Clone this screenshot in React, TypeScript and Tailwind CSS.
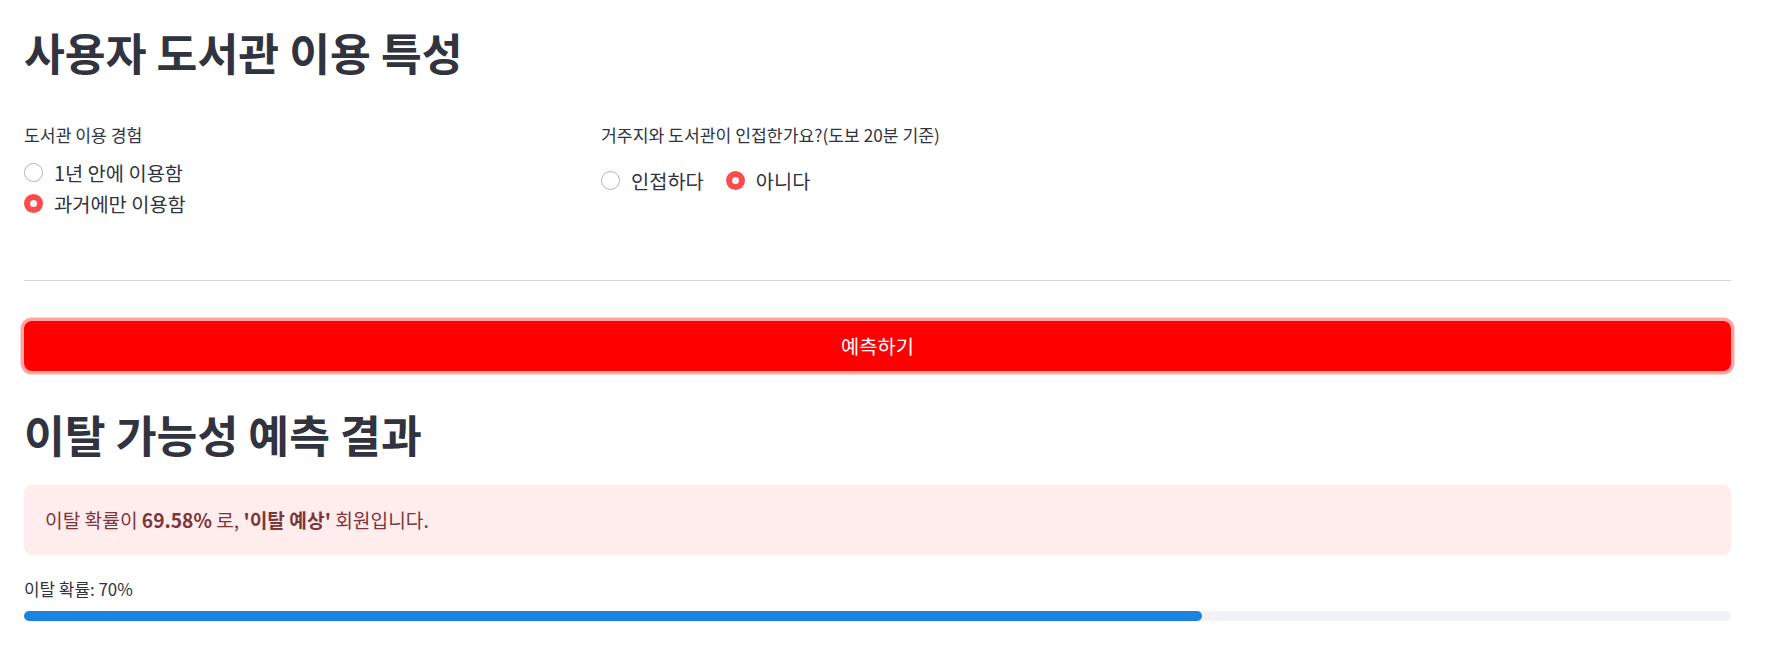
import React, { useState } from 'react';

const font = { fontFamily: '"Noto Sans CJK KR", "Noto Sans", sans-serif' };

type RadioProps = { label: string; checked: boolean; onSelect: () => void };

const Radio: React.FC<RadioProps> = ({ label, checked, onSelect }) => (
  <button
    type="button"
    onClick={onSelect}
    className="flex h-[31px] items-center gap-[11px] text-[19.8px] text-[#31333f]"
  >
    {checked ? (
      <span className="flex h-[19px] w-[19px] items-center justify-center rounded-full bg-[#ff4b4b]">
        <span className="h-[7px] w-[7px] rounded-full bg-[#f0f2f6]" />
      </span>
    ) : (
      <span className="h-[19px] w-[19px] rounded-full border border-[#b5b5b8] bg-white" />
    )}
    <span>{label}</span>
  </button>
);

const App: React.FC = () => {
  const [usage, setUsage] = useState('과거에만 이용함');
  const [near, setNear] = useState('아니다');

  return (
    <div style={font} className="min-h-screen w-full bg-white px-[24px] pt-[27px] pr-[52px] text-[#31333f]">
      <h2 className="h-[49px] text-[44.4px] leading-[49px] font-bold">사용자 도서관 이용 특성</h2>

      <div className="mt-[48px] grid grid-cols-3 gap-[24px]">
        <div>
          <div className="h-[22px] text-[17.2px] leading-[22px]">도서관 이용 경험</div>
          <div className="mt-[11px] flex flex-col">
            {['1년 안에 이용함', '과거에만 이용함'].map((o) => (
              <Radio key={o} label={o} checked={usage === o} onSelect={() => setUsage(o)} />
            ))}
          </div>
        </div>
        <div>
          <div className="h-[22px] text-[17.2px] leading-[22px]">거주지와 도서관이 인접한가요?(도보 20분 기준)</div>
          <div className="mt-[19px] flex gap-[22px]">
            {['인접하다', '아니다'].map((o) => (
              <Radio key={o} label={o} checked={near === o} onSelect={() => setNear(o)} />
            ))}
          </div>
        </div>
        <div />
      </div>

      <hr className="mt-[61px] border-0 border-t border-[#d6d6d9]" />

      <button
        type="button"
        className="mt-[40px] flex h-[50px] w-full items-center justify-center rounded-lg bg-[#ff0000] text-[19.8px] text-white shadow-[0_0_0_3.5px_#ffa3a3]"
      >
        예측하기
      </button>

      <h2 className="mt-[38px] h-[49px] text-[44.4px] leading-[49px] font-bold">이탈 가능성 예측 결과</h2>

      <div className="mt-[27px] flex h-[70px] items-center rounded-lg bg-[#ffecec] px-[21px] text-[19.2px] text-[#7d353b]">
        <span>
          이탈 확률이 <b className="font-bold">69.58%</b> 로, <b className="font-bold">'이탈 예상'</b> 회원입니다.
        </span>
      </div>

      <div className="mt-[23px] h-[22px] text-[16.9px] leading-[22px]">이탈 확률: 70%</div>
      <div className="mt-[11px] h-[10px] w-full rounded-full bg-[#f0f2f6]">
        <div className="h-full rounded-full bg-[#1c83e1]" style={{ width: '69%' }} />
      </div>
    </div>
  );
};

export default App;
